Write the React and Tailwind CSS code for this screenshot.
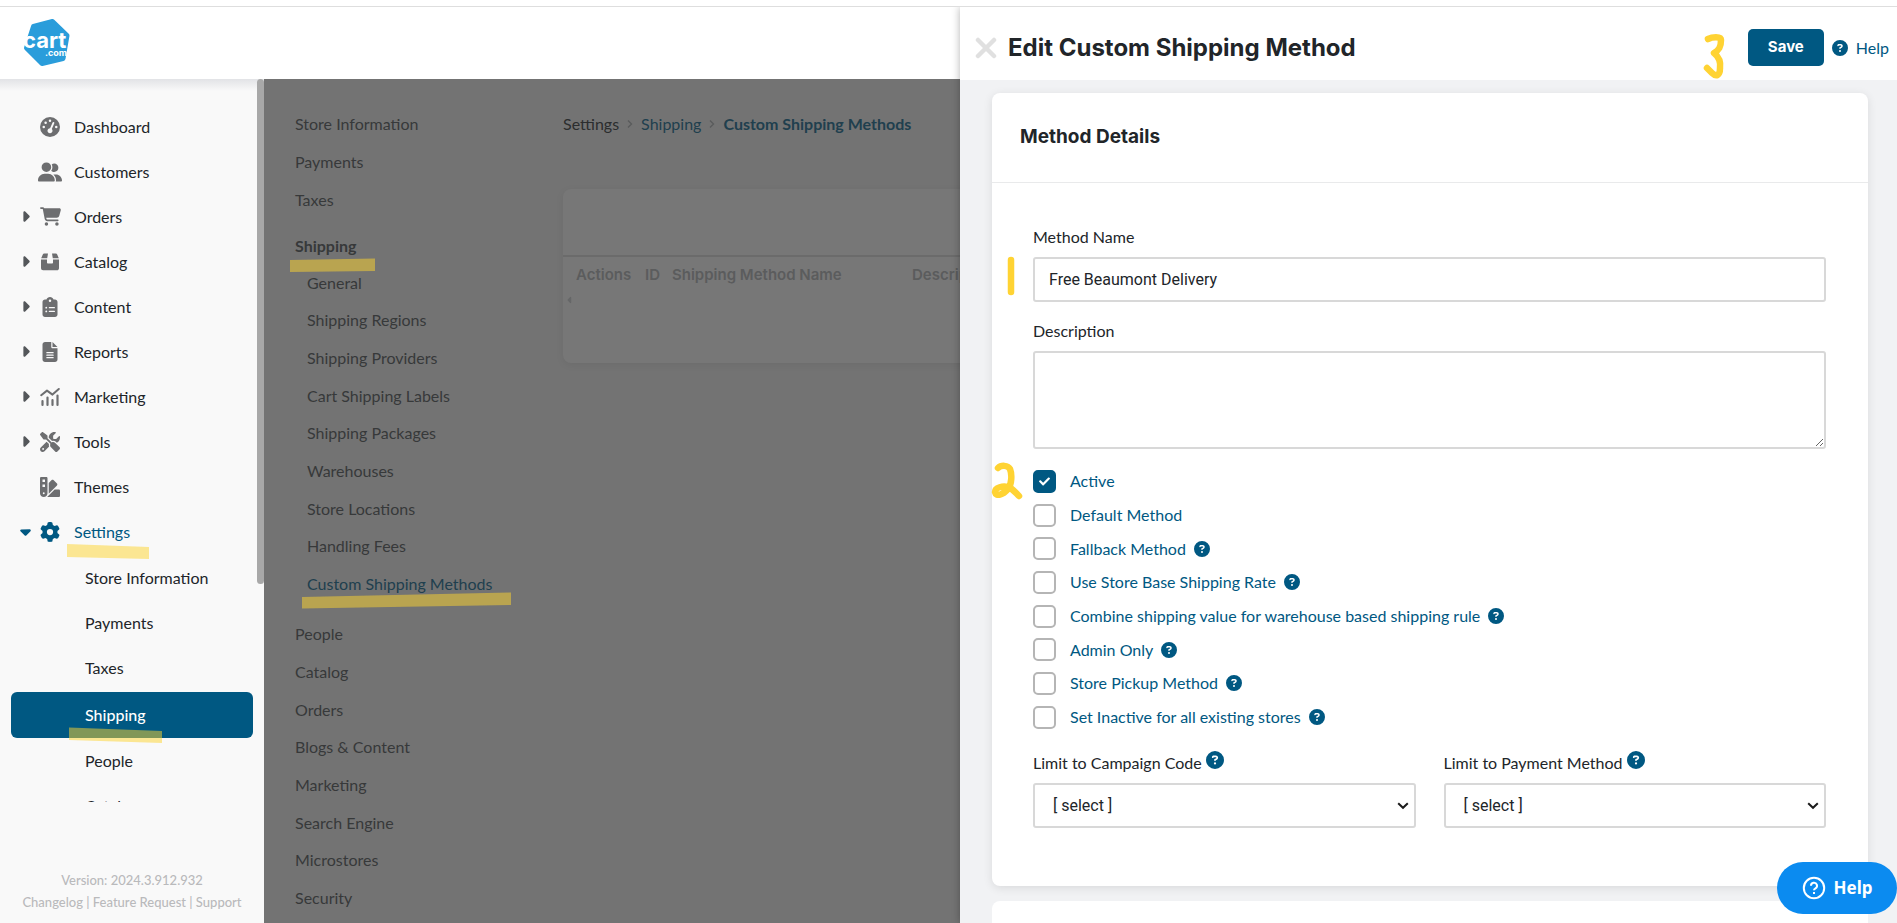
import React from "react";
import { FaCheck } from "react-icons/fa";
import {
  FaCartShopping,
  FaCaretDown,
  FaCaretLeft,
  FaCaretRight,
  FaCircleQuestion,
  FaClipboardList,
  FaFileLines,
  FaGaugeHigh,
  FaGear,
  FaScrewdriverWrench,
  FaSwatchbook,
  FaUserGroup,
} from "react-icons/fa6";

function BoxIcon() {
  return (
    <svg width="20" height="20" viewBox="0 0 20 20" fill="currentColor" aria-hidden="true">
      <path d="M4.2 1.5H8L7.2 6.2H1.2L2.8 2.4C3 1.8 3.5 1.5 4.2 1.5Z" />
      <path d="M12 1.5h3.8c.7 0 1.2.3 1.4.9l1.6 3.8h-6Z" />
      <path d="M1 7.6h6v3.2c0 .5.4.8.8.8h4.4c.5 0 .8-.3.8-.8V7.6h6v8.6c0 1.2-.9 2.1-2.1 2.1H3.1A2.1 2.1 0 0 1 1 16.2Z" />
    </svg>
  );
}

function ChartIcon() {
  return (
    <svg width="20" height="20" viewBox="0 0 20 20" fill="none" stroke="currentColor" strokeLinecap="round" aria-hidden="true">
      <path d="M1.2 8.2 7 3.6l5.500 4L18.8 2" strokeWidth="2" strokeLinejoin="round" />
      <path d="M2.500 14v4M7.500 10.500V18M12.500 13v5M17.500 8.500V18" strokeWidth="2.2" />
    </svg>
  );
}

function Logo() {
  return (
    <svg width="50" height="50" viewBox="0 0 50 50" role="img" aria-label="cart.com">
      <path
        d="M12.500 8.500 31.500 3.500 46 17.500 42 40.500 21 45.500 5.500 30Z"
        fill="#2a9ddb"
        stroke="#2a9ddb"
        strokeWidth="5"
        strokeLinejoin="round"
      />
      <text x="2" y="30" fill="#fff" fontSize="22" fontWeight="700" fontFamily="Inter, sans-serif">
        cart
        <tspan x="24" y="38" fontSize="9">.com</tspan>
      </text>
    </svg>
  );
}

const mainNav = [
  { label: "Dashboard", icon: <FaGaugeHigh size={20} /> },
  { label: "Customers", icon: <FaUserGroup size={24} /> },
  { label: "Orders", icon: <FaCartShopping size={21} />, expandable: true },
  { label: "Catalog", icon: <BoxIcon />, expandable: true },
  { label: "Content", icon: <FaClipboardList size={20} />, expandable: true },
  { label: "Reports", icon: <FaFileLines size={20} />, expandable: true },
  { label: "Marketing", icon: <ChartIcon />, expandable: true },
  { label: "Tools", icon: <FaScrewdriverWrench size={20} />, expandable: true },
  { label: "Themes", icon: <FaSwatchbook size={20} /> },
];

const settingsNav = ["Store Information", "Payments", "Taxes", "Shipping", "People", "Catalog"];

const shippingPages = [
  "General",
  "Shipping Regions",
  "Shipping Providers",
  "Cart Shipping Labels",
  "Shipping Packages",
  "Warehouses",
  "Store Locations",
  "Handling Fees",
  "Custom Shipping Methods",
];

const otherPages = [
  "People",
  "Catalog",
  "Orders",
  "Blogs & Content",
  "Marketing",
  "Search Engine",
  "Microstores",
  "Security",
];

const options = [
  { label: "Active", checked: true },
  { label: "Default Method" },
  { label: "Fallback Method", help: true },
  { label: "Use Store Base Shipping Rate", help: true },
  { label: "Combine shipping value for warehouse based shipping rule", help: true },
  { label: "Admin Only", help: true },
  { label: "Store Pickup Method", help: true },
  { label: "Set Inactive for all existing stores", help: true },
];

function Sidebar() {
  return (
    <aside className="relative flex w-[264px] shrink-0 flex-col bg-[#f9f9f9] text-base text-[#212529]">
      <div className="pointer-events-none absolute inset-x-0 top-0 h-3 bg-linear-to-b from-[#e2e3e6] to-[#f9f9f9]" />
      <div className="absolute top-0 right-0 h-[505px] w-[7px] rounded-full bg-[#a8a8a8]" />
      <nav className="min-h-0 flex-1 overflow-hidden pt-[25px]" aria-label="Main">
        <ul>
          {mainNav.map((item) => (
            <li key={item.label}>
              <a href="#" className="flex h-[45px] items-center pl-3.5">
                <span className="flex w-[22px] justify-center text-[#54575a]">
                  {item.expandable && <FaCaretRight size={17} />}
                </span>
                <span className="ml-0.5 flex w-6 justify-center text-[#6d6e70]">{item.icon}</span>
                <span className="ml-3">{item.label}</span>
              </a>
            </li>
          ))}
          <li>
            <a href="#" className="flex h-[45px] items-center pl-3.5 text-[#005882]">
              <span className="flex w-[22px] justify-center">
                <FaCaretDown size={17} />
              </span>
              <span className="ml-0.5 flex w-6 justify-center">
                <FaGear size={20} />
              </span>
              <span className="ml-3">Settings</span>
            </a>
            <ul className="pt-px">
              {settingsNav.map((label) => (
                <li key={label}>
                  {label === "Shipping" ? (
                    <a
                      href="#"
                      aria-current="page"
                      className="mx-[11px] mt-0.5 flex h-[46px] items-center rounded-md bg-[#005882] pl-[74px] font-medium text-white"
                    >
                      {label}
                    </a>
                  ) : (
                    <a href="#" className="flex h-[45px] items-center pl-[85px]">
                      {label}
                    </a>
                  )}
                </li>
              ))}
            </ul>
          </li>
        </ul>
      </nav>
      <footer className="flex h-[121px] shrink-0 flex-col justify-end pb-2.5 text-center text-[13px] leading-[22px] font-medium text-[#b9babc]">
        <p>Version: 2024.3.912.932</p>
        <p>
          <a href="#">Changelog</a> | <a href="#">Feature Request</a> | <a href="#">Support</a>
        </p>
      </footer>
    </aside>
  );
}

function SettingsMenu() {
  return (
    <nav className="w-[299px] shrink-0 overflow-hidden pt-[26px] pl-[31px] text-base text-[#37393a]" aria-label="Settings">
      <ul>
        {["Store Information", "Payments", "Taxes"].map((label) => (
          <li key={label} className="flex h-[38px] items-center">
            <a href="#">{label}</a>
          </li>
        ))}
      </ul>
      <ul className="mt-2">
        <li className="flex h-[37px] items-center font-bold">
          <a href="#">Shipping</a>
        </li>
        {shippingPages.map((label) => (
          <li
            key={label}
            className="flex h-[38px] items-center pl-3 last:text-[#203f4e] nth-[3n+2]:h-[37px]"
          >
            <a href="#">{label}</a>
          </li>
        ))}
      </ul>
      <ul className="mt-3">
        {otherPages.map((label) => (
          <li key={label} className="flex h-[38px] items-center nth-[3n]:h-[37px]">
            <a href="#">{label}</a>
          </li>
        ))}
      </ul>
    </nav>
  );
}

function Crumb() {
  return (
    <svg width="6" height="8" viewBox="0 0 6 8" fill="none" stroke="#595b5c" strokeWidth="1.3" aria-hidden="true">
      <path d="M1 .5 4.500 4 1 7.500" />
    </svg>
  );
}

function MethodsPage() {
  return (
    <main className="min-w-0 flex-1 pt-[33px]">
      <div className="flex items-center gap-2 leading-6 text-[#203f4e]">
        <a href="#" className="text-[#2b2d2e]">Settings</a>
        <Crumb />
        <a href="#">Shipping</a>
        <Crumb />
        <a href="#" className="font-bold">Custom Shipping Methods</a>
      </div>
      <section className="mt-[53px] h-[174px] rounded-lg bg-[#777777] shadow-[0_2px_8px_rgba(0,0,0,0.06)]">
        <div className="box-content h-[66px] border-b-2 border-[#6b6b6b]" />
        <table className="mt-1.5 table-fixed text-left font-[Inter] text-[15px] leading-6 text-[#5b5c5d]">
          <thead>
            <tr>
              <th className="w-[82px] pl-[13px] font-semibold">Actions</th>
              <th className="w-[27px] font-semibold">ID</th>
              <th className="w-[240px] font-semibold">Shipping Method Name</th>
              <th className="w-[160px] font-semibold">Description</th>
            </tr>
          </thead>
        </table>
        <FaCaretLeft size={10} className="mt-2 ml-0.5 text-[#666768]" aria-hidden="true" />
      </section>
    </main>
  );
}

function OptionRow({ label, checked, help }) {
  return (
    <div className="flex h-[34px] items-center text-[#005882] nth-[3n]:h-[33px]">
      <label className="flex items-center">
        <span className="relative mr-3.5 flex size-[23px] items-center justify-center">
          <input
            type="checkbox"
            defaultChecked={checked}
            className="peer size-[23px] appearance-none rounded-[5px] border-2 border-[#b5b5b5] bg-white checked:border-[#005882] checked:bg-[#005882]"
          />
          <FaCheck size={11} className="pointer-events-none absolute hidden text-white peer-checked:block" />
        </span>
        {label}
      </label>
      {help && <FaCircleQuestion size={16} className="ml-2 shrink-0" title="Help" />}
    </div>
  );
}

function LimitField({ id, label }) {
  return (
    <div>
      <div className="flex h-6 items-center">
        <label htmlFor={id}>{label}</label>
        <FaCircleQuestion size={18} className="mb-1.5 ml-1 text-[#005882]" title="Help" />
      </div>
      <div className="relative mt-2">
        <select
          id={id}
          className="h-[45px] w-full appearance-none rounded-[3px] border-2 border-[#d8d8d8] bg-white px-[18px] font-[Roboto]"
        >
          <option>[ select ]</option>
        </select>
        <svg
          width="12"
          height="8"
          viewBox="0 0 12 8"
          fill="none"
          stroke="#1b1b1b"
          strokeWidth="2"
          className="pointer-events-none absolute top-[19px] right-[7px]"
          aria-hidden="true"
        >
          <path d="m1.2 1.2 4.8 4.6 4.8-4.6" />
        </svg>
      </div>
    </div>
  );
}

function Drawer() {
  return (
    <div
      role="dialog"
      aria-labelledby="drawer-title"
      className="absolute inset-y-0 right-0 flex w-[937px] max-w-full flex-col overflow-hidden bg-[#f1f2f4] text-base text-[#212529]"
    >
      <header className="flex h-[73px] shrink-0 items-center bg-white pt-2 pr-2 pl-[15px]">
        <button type="button" aria-label="Close" className="flex size-[22px] items-center justify-center">
          <svg width="22" height="22" viewBox="0 0 22 22" stroke="#e0e0e0" strokeWidth="4.500" strokeLinecap="round">
            <path d="m3 3 16 16M19 3 3 19" />
          </svg>
        </button>
        <h1 id="drawer-title" className="ml-[11px] font-[Inter] text-2xl font-bold">
          Edit Custom Shipping Method
        </h1>
        <button
          type="button"
          className="ml-auto h-[37px] w-[76px] rounded-[5px] bg-[#005882] font-[Inter] text-[15px] font-bold text-white"
        >
          Save
        </button>
        <a href="#" className="ml-2 flex items-center gap-2 text-[#005882]">
          <FaCircleQuestion size={16} />
          Help
        </a>
      </header>
      <div className="min-h-0 flex-1 overflow-hidden pt-[13px] pr-[29px] pl-8">
        <section className="rounded-lg bg-white shadow-[0_2px_10px_rgba(0,0,0,0.1)]">
          <h2 className="flex h-[90px] items-center border-b border-[#e9eaeb] pl-7 font-[Inter] text-[19px] font-bold">
            Method Details
          </h2>
          <form className="pt-[42px] pr-[42px] pb-[58px] pl-[41px]">
            <label htmlFor="method-name" className="block leading-6">Method Name</label>
            <input
              id="method-name"
              type="text"
              defaultValue="Free Beaumont Delivery"
              className="mt-2 block h-[45px] w-full rounded-[3px] border-2 border-[#d8d8d8] bg-white px-3.5 font-[Roboto] text-base"
            />
            <label htmlFor="description" className="mt-[17px] block leading-6">Description</label>
            <textarea
              id="description"
              className="mt-2 block h-[98px] w-full resize-y rounded-[3px] border-2 border-[#d8d8d8] bg-white px-3.5 py-2 font-[Roboto] text-base"
            />
            <div className="mt-[15px]">
              {options.map((option) => (
                <OptionRow key={option.label} {...option} />
              ))}
            </div>
            <div className="mt-[17px] grid grid-cols-2 gap-7">
              <LimitField id="campaign-code" label="Limit to Campaign Code" />
              <LimitField id="payment-method" label="Limit to Payment Method" />
            </div>
          </form>
        </section>
        <section className="mt-[15px] h-24 rounded-lg bg-white" />
      </div>
    </div>
  );
}

function Annotations() {
  return (
    <svg
      width="1897"
      height="923"
      viewBox="0 0 1897 923"
      className="pointer-events-none absolute top-0 left-0"
      aria-hidden="true"
    >
      <g fill="#fdd42f" fillOpacity="0.51">
        <path d="M67 544 149 547V559L67 557Z" />
        <path d="M69 727.500 162 731V743L69 740Z" />
        <path d="M290 260 375 258.500V271L290 272Z" />
        <path d="M302 597 511 592.500V605L302 608.500Z" />
      </g>
      <g fill="none" stroke="#ffd333" strokeWidth="6.500" strokeLinecap="round" strokeLinejoin="round">
        <path d="M1011 260V292" />
        <path d="M998 468C1001 465 1008 465 1010 469C1012 474 1012 484 1008 489C1003 495 996 497 995 492C995 487 1003 486 1008 487C1012 488 1015 492 1019 496" />
        <path d="M1708 39C1712 37 1721 36 1721 40C1721 47 1719 50 1714 53C1719 57 1721 61 1720 68C1720 76 1716 77 1712 73L1707 68" />
      </g>
    </svg>
  );
}

export default function App() {
  return (
    <div className="relative flex h-screen flex-col overflow-hidden bg-white pt-1.5 font-[Lato,sans-serif]">
      <div className="relative flex min-h-0 flex-1 flex-col overflow-hidden border-t border-[#dedede]">
        <header className="flex h-[72px] shrink-0 items-center bg-white pl-[21px]">
          <a href="#">
            <Logo />
          </a>
        </header>
        <div className="flex min-h-0 flex-1 bg-[#737373]">
          <Sidebar />
          <SettingsMenu />
          <MethodsPage />
        </div>
        <div className="pointer-events-none absolute inset-y-0 right-0 w-[937px] max-w-full shadow-[0_0_8px_rgba(0,0,0,0.3)]" />
        <Drawer />
      </div>
      <button
        type="button"
        className="absolute right-0 bottom-[9px] flex h-[52px] w-[120px] items-center justify-center gap-2 rounded-full bg-[#0b8bf0] font-['Noto_Sans'] text-[17px] font-bold text-white"
      >
        <svg width="24" height="24" viewBox="0 0 24 24" fill="none" stroke="currentColor" strokeWidth="2" aria-hidden="true">
          <circle cx="12" cy="12" r="10.2" />
          <path d="M9 9.800a3 3 0 1 1 4.500 2.500c-1 .6-1.500 1-1.500 2" />
          <path d="M12 16v2" />
        </svg>
        Help
      </button>
      <Annotations />
    </div>
  );
}
